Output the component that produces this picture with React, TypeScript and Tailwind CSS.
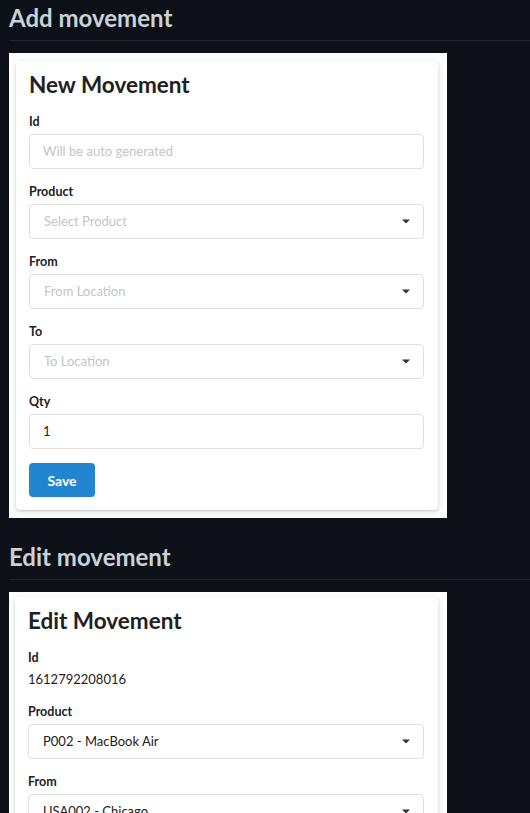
import type { ReactNode } from 'react';

function Caret() {
  return (
    <svg width="8" height="5" viewBox="0 0 8 5" className="shrink-0" aria-hidden="true">
      <path d="M0 0.5 H8 L4 4.5 Z" fill="#333333" />
    </svg>
  );
}

function Field({ label, children }: { label: string; children: ReactNode }) {
  return (
    <div className="mb-[14px]">
      <div className="text-[12.5px] leading-[17px] font-bold text-[#212121] mb-[4px]">{label}</div>
      {children}
    </div>
  );
}

function TextBox({ value, placeholder }: { value?: string; placeholder?: string }) {
  return (
    <div className="h-[35px] flex items-center px-[13px] border border-[#e0e0e1] rounded-[4px] text-[13px]">
      {value ? (
        <span className="text-[#212121]">{value}</span>
      ) : (
        <span className="text-[#c4c4c4]">{placeholder}</span>
      )}
    </div>
  );
}

function SelectBox({ value, placeholder }: { value?: string; placeholder?: string }) {
  return (
    <div className="h-[35px] flex items-center justify-between pl-[14px] pr-[13px] border border-[#e0e0e1] rounded-[4px] text-[13px]">
      {value ? (
        <span className="text-[#212121]">{value}</span>
      ) : (
        <span className="text-[#c4c4c4]">{placeholder}</span>
      )}
      <Caret />
    </div>
  );
}

function SaveButton() {
  return (
    <button className="w-[66px] h-[34px] rounded-[4px] bg-[#2185d0] text-white text-[14px] font-bold">
      Save
    </button>
  );
}

export default function App() {
  return (
    <div className="min-h-screen bg-[#0d1117] pt-[3px] pl-[9px] pb-10 font-['Lato','Open_Sans',sans-serif]">
      {/* Add section */}
      <h2 className="text-[24px] leading-[30px] font-bold text-[#c9d1d9] pb-[7px] border-b border-[#21262d]">
        Add movement
      </h2>
      <div className="mt-[12px] w-[438px] bg-white pt-[8px] pl-[7px] pr-[9px] pb-[8px]">
        <div className="bg-white rounded-[4px] shadow-[0_1px_2px_0_rgba(0,0,0,0.15),0_2px_8px_0_rgba(0,0,0,0.12)] pt-[9px] pl-[13px] pr-[14px] pb-[13px]">
          <div className="text-[22.5px] leading-[30px] font-bold text-[#212121] mb-[13px]">New Movement</div>
          <Field label="Id">
            <TextBox placeholder="Will be auto generated" />
          </Field>
          <Field label="Product">
            <SelectBox placeholder="Select Product" />
          </Field>
          <Field label="From">
            <SelectBox placeholder="From Location" />
          </Field>
          <Field label="To">
            <SelectBox placeholder="To Location" />
          </Field>
          <Field label="Qty">
            <TextBox value="1" />
          </Field>
          <SaveButton />
        </div>
      </div>

      {/* Edit section */}
      <h2 className="mt-[24px] text-[24px] leading-[30px] font-bold text-[#c9d1d9] pb-[7px] border-b border-[#21262d]">
        Edit movement
      </h2>
      <div className="mt-[12px] w-[438px] bg-white pt-[5px] pl-[6px] pr-[9px] pb-[8px]">
        <div className="bg-white rounded-[4px] shadow-[0_1px_2px_0_rgba(0,0,0,0.15),0_2px_8px_0_rgba(0,0,0,0.12)] pt-[9px] pl-[13px] pr-[14px] pb-[13px]">
          <div className="text-[22.5px] leading-[30px] font-bold text-[#212121] mb-[14px]">Edit Movement</div>
          <div className="mb-[14px]">
            <div className="text-[12.5px] leading-[16px] font-bold text-[#212121]">Id</div>
            <div className="mt-[3px] text-[13px] leading-[20px] text-[#212121]">1612792208016</div>
          </div>
          <Field label="Product">
            <SelectBox value="P002 - MacBook Air" />
          </Field>
          <Field label="From">
            <SelectBox value="USA002 - Chicago" />
          </Field>
          <Field label="To">
            <SelectBox value="USA001 - New York" />
          </Field>
          <Field label="Qty">
            <TextBox value="1" />
          </Field>
          <SaveButton />
        </div>
      </div>
    </div>
  );
}
